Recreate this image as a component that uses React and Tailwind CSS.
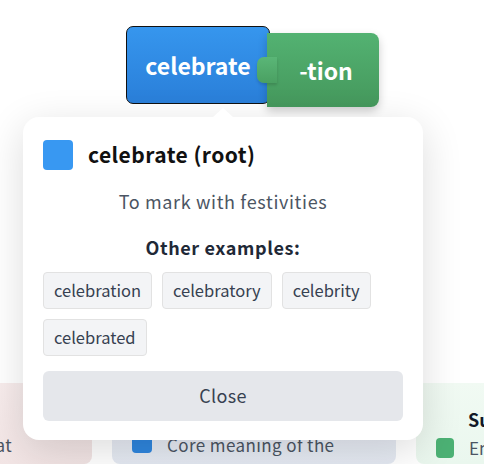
import React from 'react'

const examples = ['celebration', 'celebratory', 'celebrity', 'celebrated']

const font = { fontFamily: '"Noto Sans CJK KR", "Noto Sans", sans-serif' }

export default function App() {
    return (
        <div className="relative w-[484px] h-[464px] overflow-hidden bg-white" style={font}>
            {/* Word blocks */}
            <div className="flex pl-[126px] pt-[26px] h-[383px]">
                <div className="w-[144px] h-[78px] rounded-[7px] border border-[#111] bg-gradient-to-b from-[#3696ee] to-[#2a7fd9] flex items-center justify-center text-white text-[23px] font-bold">
                    celebrate
                </div>
                <div className="relative -ml-[3px] mt-[7px] w-[112px] h-[74px] rounded-r-[8px] bg-gradient-to-b from-[#53b272] to-[#45985c] shadow-[0_4px_10px_rgba(0,0,0,0.2)] flex items-center justify-center text-white text-[23px] font-bold">
                    <div className="absolute -left-[10px] top-[24px] w-[20px] h-[26px] rounded-l-[7px] bg-gradient-to-b from-[#5ab677] to-[#4aa062] shadow-[0_2px_3px_rgba(0,0,0,0.15)]" />
                    <span className="pl-[6px]">-tion</span>
                </div>
            </div>

            {/* Cards behind */}
            <div className="flex gap-5 -ml-[192px] h-[81px]">
                <div className="w-[284px] shrink-0 bg-gradient-to-br from-[#fbf1f1] to-[#f1e3e3] rounded-lg pt-[53px] pr-[80px] flex justify-end">
                    <span className="text-[17px] text-[#4b5563] leading-none tracking-[0.4px]">at</span>
                </div>
                <div className="w-[284px] shrink-0 bg-gradient-to-b from-[#eef1f7] to-[#e4e9f2] rounded-lg px-5 pt-[50px] flex items-start gap-[15px]">
                    <div className="w-5 h-5 rounded-[4px] bg-[#2f86de] shrink-0" />
                    <span className="text-[17px] text-[#4b5563] leading-none mt-[3px] tracking-[0.4px]">Core meaning of the</span>
                </div>
                <div className="w-[284px] shrink-0 bg-gradient-to-b from-[#f1faf3] to-[#eaf7ee] rounded-lg px-5 pt-[27px]">
                    <div className="pl-[32px] text-[18px] font-bold text-[#111827] leading-none">Suffix</div>
                    <div className="flex items-center gap-[15px] mt-[7px]">
                        <div className="w-[18px] h-5 rounded-[4px] bg-[#4cb174] shrink-0" />
                        <span className="text-[17px] text-[#4b5563]">Emphasis</span>
                    </div>
                </div>
            </div>

            {/* Popup */}
            <div className="absolute left-[23px] top-[117px] w-[400px] h-[323px] bg-white rounded-2xl shadow-[0_10px_40px_rgba(0,0,0,0.14)] px-5 pt-[22px]">
                <div className="absolute left-[190px] -top-[9px] w-0 h-0 border-x-[10px] border-x-transparent border-b-[9px] border-b-white" />
                <div className="flex items-center gap-[15px]">
                    <div className="w-[30px] h-[30px] rounded-[4px] bg-[#3898f2]" />
                    <span className="text-[21px] font-bold text-[#111] tracking-[0.45px]">celebrate (root)</span>
                </div>
                <p className="mt-[17px] text-center text-[18px] text-[#4b5563] tracking-[0.65px]">To mark with festivities</p>
                <p className="mt-[19px] text-center text-[18px] font-bold text-[#1f2937] tracking-[0.6px]">Other examples:</p>
                <div className="mt-[11px] flex flex-wrap gap-[10px]">
                    {examples.map((w) => (
                        <span key={w} className="h-[37px] px-[10px] flex items-center rounded-[4px] border border-[#e2e2e2] bg-[#f3f4f6] text-[16.5px] text-[#374151]">
                            {w}
                        </span>
                    ))}
                </div>
                <button className="mt-[15px] w-full h-[50px] rounded-[6px] bg-[#e5e7eb] text-[18px] text-[#374151] tracking-[0.3px]">
                    Close
                </button>
            </div>
        </div>
    )
}
